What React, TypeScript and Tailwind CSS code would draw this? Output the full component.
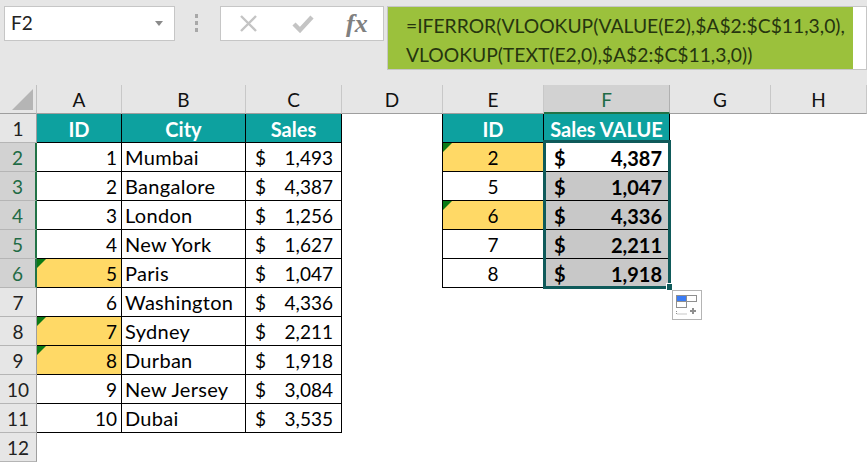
import React from "react";

const cols = ["A", "B", "C", "D", "E", "F", "G", "H"];

const rows = [
  { id: "1", city: "Mumbai", sales: "1,493" },
  { id: "2", city: "Bangalore", sales: "4,387" },
  { id: "3", city: "London", sales: "1,256" },
  { id: "4", city: "New York", sales: "1,627" },
  { id: "5", city: "Paris", sales: "1,047", flag: true },
  { id: "6", city: "Washington", sales: "4,336" },
  { id: "7", city: "Sydney", sales: "2,211", flag: true },
  { id: "8", city: "Durban", sales: "1,918", flag: true },
  { id: "9", city: "New Jersey", sales: "3,084" },
  { id: "10", city: "Dubai", sales: "3,535" },
];

const lookup = [
  { id: "2", value: "4,387", flag: true },
  { id: "5", value: "1,047" },
  { id: "6", value: "4,336", flag: true },
  { id: "7", value: "2,211" },
  { id: "8", value: "1,918" },
];

function Flag() {
  return (
    <span className="absolute left-0 top-0 h-0 w-0 border-r-[9px] border-t-[9px] border-r-transparent border-t-[#0b7a16]" />
  );
}

function RowHead({ n, active }: { n: number; active?: boolean }) {
  return (
    <div
      className={`flex items-center justify-center border-b border-r border-b-[#b5b5b5] pt-[2px] text-[19px] ${
        active
          ? "border-r-2 border-r-[#217346] bg-[#d2d2d2] text-[#1f6b45]"
          : "border-r-[#9e9e9e] bg-[#e6e6e6] text-[#222]"
      }`}
    >
      {n}
    </div>
  );
}

function TealHead({ children }: { children: React.ReactNode }) {
  return (
    <div className="flex items-center justify-center border-b border-r border-black bg-[#0da19f] pt-[2px] text-[20px] font-bold text-white">
      {children}
    </div>
  );
}

function Sales({ value }: { value: string }) {
  return (
    <div className="flex items-center justify-between border-b border-r border-black pl-[9px] pr-[8px] pt-[2px] text-[19px] text-black">
      <span>$</span>
      <span>{value}</span>
    </div>
  );
}

function Empty({ edge }: { edge?: boolean }) {
  return <div className={edge ? "border-r border-black bg-white" : "bg-white"} />;
}

export default function App() {
  return (
    <div className="h-[462px] w-[867px] overflow-hidden bg-white font-['Lato','Liberation_Sans',sans-serif]">
      {/* ribbon + formula bar */}
      <div className="flex h-[85px] items-start bg-[#e6e6e6] pl-[4px] pt-[6px]">
        <div className="flex h-[35px] w-[171px] items-center justify-between border border-[#c6c6c6] bg-white pl-[6px] pr-[11px] text-[19px] text-[#222]">
          F2
          <span className="h-0 w-0 border-x-[4px] border-t-[5px] border-x-transparent border-t-[#8a8a8a]" />
        </div>
        <div className="ml-[20px] mt-[8px] flex flex-col gap-[3px]">
          <span className="h-[4px] w-[3px] bg-[#a8a8a8]" />
          <span className="h-[4px] w-[3px] bg-[#a8a8a8]" />
          <span className="h-[4px] w-[3px] bg-[#a8a8a8]" />
        </div>
        <div className="ml-[22px] flex h-[35px] w-[164px] items-center border border-[#c6c6c6] bg-white text-[#c4c4c4]">
          <svg className="ml-[18px]" width="19" height="19" viewBox="0 0 19 19">
            <path d="M2 2l15 15M17 2L2 17" stroke="currentColor" strokeWidth="2.4" fill="none" />
          </svg>
          <svg className="ml-[34px]" width="22" height="19" viewBox="0 0 22 19">
            <path d="M2 10l6 6L20 3" stroke="currentColor" strokeWidth="4.4" fill="none" />
          </svg>
          <span className="ml-[32px] font-['Liberation_Serif',serif] text-[26px] font-bold italic leading-none text-[#808080]">
            fx
          </span>
        </div>
        <div className="ml-[3px] flex h-[64px] w-[480px] border border-[#c6c6c6] bg-white">
          <div className="h-full w-[465px] bg-[#9bc13c] pl-[18px] pt-[4px] text-[19.3px] leading-[29px] text-[#26350f]">
            <div className="whitespace-nowrap">=IFERROR(VLOOKUP(VALUE(E2),$A$2:$C$11,3,0),</div>
            <div className="whitespace-nowrap">VLOOKUP(TEXT(E2,0),$A$2:$C$11,3,0))</div>
          </div>
        </div>
      </div>

      {/* sheet */}
      <div className="relative grid grid-cols-[37px_85px_124px_96px_101px_101px_126px_101px_96px] grid-rows-[29px_repeat(12,29px)]">
        <div className="relative border-b border-r border-b-[#9e9e9e] border-r-[#c0c0c0] bg-[#e6e6e6]">
          <span className="absolute bottom-[3px] right-[3px] h-0 w-0 border-b-[21px] border-l-[21px] border-b-[#b5b5b5] border-l-transparent" />
        </div>
        {cols.map((c) =>
          c === "F" ? (
            <div
              key={c}
              className="flex items-center justify-center border-b-2 border-r border-b-[#217346] border-r-[#b0b0b0] bg-[#d2d2d2] pt-[3px] text-[19px] text-[#1f6b45]"
            >
              {c}
            </div>
          ) : (
            <div
              key={c}
              className="flex items-center justify-center border-b border-r border-b-[#9e9e9e] border-r-[#c8c8c8] bg-[#e6e6e6] pt-[3px] text-[19px] text-[#111]"
            >
              {c}
            </div>
          )
        )}

        <RowHead n={1} />
        <TealHead>ID</TealHead>
        <TealHead>City</TealHead>
        <TealHead>Sales</TealHead>
        <Empty edge />
        <TealHead>ID</TealHead>
        <TealHead>Sales VALUE</TealHead>
        <Empty />
        <Empty />

        {rows.map((r, i) => {
          const l = lookup[i];
          return (
            <React.Fragment key={r.id}>
              <RowHead n={i + 2} active={i < 5} />
              <div
                className={`relative flex items-center justify-end border-b border-r border-black pr-[4px] pt-[2px] text-[19px] text-black ${
                  r.flag ? "bg-[#ffd966]" : "bg-white"
                }`}
              >
                {r.flag && <Flag />}
                {r.id}
              </div>
              <div className="flex items-center border-b border-r border-black pl-[3px] text-[20px] tracking-[0.3px] text-black">
                {r.city}
              </div>
              <Sales value={r.sales} />
              <Empty edge={!!l} />
              {l ? (
                <div
                  className={`relative flex items-center justify-center border-b border-r border-black pt-[2px] text-[19px] text-black ${
                    l.flag ? "bg-[#ffd966]" : "bg-white"
                  }`}
                >
                  {l.flag && <Flag />}
                  {l.id}
                </div>
              ) : (
                <Empty />
              )}
              {l ? (
                <div
                  className={`flex items-center justify-between border-b border-r border-black pl-[10px] pr-[7px] pt-[1px] text-[20px] font-bold text-black ${
                    i === 0 ? "bg-white" : "bg-[#c8c8c8]"
                  }`}
                >
                  <span>$</span>
                  <span>{l.value}</span>
                </div>
              ) : (
                <Empty />
              )}
              <Empty />
              <Empty />
            </React.Fragment>
          );
        })}

        <RowHead n={12} />

        {/* selection around F2:F6 */}
        <div className="pointer-events-none absolute left-[543px] top-[55px] h-[149px] w-[128px] border-[3px] border-[#0f5a5a]" />
        <div className="absolute left-[666px] top-[198px] h-[7px] w-[6px] border-l border-t border-white bg-[#0f5a5a]" />

        {/* paste options */}
        <div className="absolute left-[672px] top-[205px] flex h-[30px] w-[30px] items-center justify-center border border-[#b4b4b4] bg-white">
          <svg width="22" height="20" viewBox="0 0 22 20">
            <rect x="0.5" y="0.5" width="10" height="6" fill="#3b7cf5" stroke="#8f8f8f" />
            <rect x="10.5" y="0.5" width="10" height="6" fill="#fff" stroke="#8f8f8f" />
            <rect x="0.5" y="6.5" width="10" height="6" fill="#fff" stroke="#8f8f8f" />
            <path d="M0.5 16v3h10" stroke="#8f8f8f" strokeDasharray="1 1" fill="none" />
            <path d="M17 13v6M14 16h6" stroke="#8f8f8f" strokeWidth="2" fill="none" />
          </svg>
        </div>
      </div>
    </div>
  );
}
